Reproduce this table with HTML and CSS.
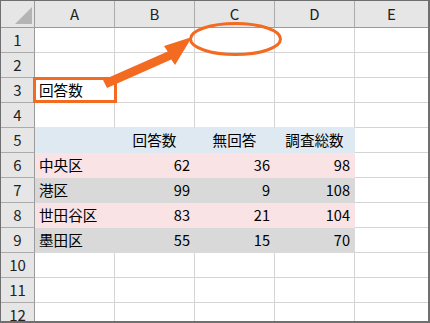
FILE: index.html
```html
<!DOCTYPE html>
<html>
<head>
<meta charset="utf-8">
<title>回答数</title>
<link rel="stylesheet" href="styles.css">
</head>
<body>
<div class="frame">
    <div class="sheet">
        <div class="hd corner"><span class="selall"></span></div>
        <div class="hd col">A</div>
        <div class="hd col">B</div>
        <div class="hd col">C</div>
        <div class="hd col">D</div>
        <div class="hd col last">E</div>

        <div class="hd row">1</div>
        <div class="c"></div><div class="c"></div><div class="c"></div><div class="c"></div><div class="c last"></div>

        <div class="hd row">2</div>
        <div class="c"></div><div class="c"></div><div class="c"></div><div class="c"></div><div class="c last"></div>

        <div class="hd row">3</div>
        <div class="c">回答数</div><div class="c"></div><div class="c"></div><div class="c"></div><div class="c last"></div>

        <div class="hd row">4</div>
        <div class="c above"></div><div class="c above"></div><div class="c above"></div><div class="c above"></div><div class="c last"></div>

        <div class="hd row">5</div>
        <div class="c blue"></div>
        <div class="c blue mid">回答数</div>
        <div class="c blue mid">無回答</div>
        <div class="c blue mid">調査総数</div>
        <div class="c last"></div>

        <div class="hd row">6</div>
        <div class="c pink">中央区</div>
        <div class="c pink num">62</div>
        <div class="c pink num">36</div>
        <div class="c pink num">98</div>
        <div class="c last"></div>

        <div class="hd row">7</div>
        <div class="c gray">港区</div>
        <div class="c gray num">99</div>
        <div class="c gray num">9</div>
        <div class="c gray num">108</div>
        <div class="c last"></div>

        <div class="hd row">8</div>
        <div class="c pink">世田谷区</div>
        <div class="c pink num">83</div>
        <div class="c pink num">21</div>
        <div class="c pink num">104</div>
        <div class="c last"></div>

        <div class="hd row">9</div>
        <div class="c gray">墨田区</div>
        <div class="c gray num">55</div>
        <div class="c gray num">15</div>
        <div class="c gray num">70</div>
        <div class="c last"></div>

        <div class="hd row">10</div>
        <div class="c"></div><div class="c"></div><div class="c"></div><div class="c"></div><div class="c last"></div>

        <div class="hd row">11</div>
        <div class="c"></div><div class="c"></div><div class="c"></div><div class="c"></div><div class="c last"></div>

        <div class="hd row">12</div>
        <div class="c"></div><div class="c"></div><div class="c"></div><div class="c"></div><div class="c last"></div>
    </div>

    <!-- callout: box on A3, arrow, ring on C1 -->
    <svg class="marks" width="430" height="323" viewBox="0 0 430 323">
        <rect x="34.5" y="78.5" width="81" height="23" fill="none" stroke="#f26b21" stroke-width="3"/>
        <polygon points="103,80 167.7,51.4 164,46 192,37 175,65 171.3,59.6 107,88" fill="#f26b21"/>
        <ellipse cx="235.5" cy="39" rx="45" ry="15.5" fill="none" stroke="#f26b21" stroke-width="3"/>
    </svg>
</div>
</body>
</html>
```

FILE: styles.css
```css
body {
    margin: 0;
    background: #fff;
}
.frame {
    position: relative;
    width: 430px;
    height: 323px;
    box-sizing: border-box;
    border-style: solid;
    border-color: #6f6f6f;
    border-width: 1px 2px 2px 1px;
    overflow: hidden;
    font-family: "Noto Sans CJK JP", "Liberation Sans", sans-serif;
    font-size: 14.6px;
    color: #000;
}
.sheet {
    display: grid;
    grid-template-columns: 34px repeat(4, 80px) 73px;
    grid-template-rows: 27px;
    grid-auto-rows: 25px;
}
.sheet > div {
    box-sizing: border-box;
    border-right: 1px solid #d4d4d4;
    border-bottom: 1px solid #d4d4d4;
    display: flex;
    align-items: center;
    padding-bottom: 2px;
    white-space: nowrap;
    overflow: hidden;
}
.sheet > div.last {
    border-right: none;
}

/* headers */
.hd {
    background-color: #e6e6e6;
    color: #222;
    justify-content: center;
    font-size: 15px;
}
.sheet > .hd.col {
    border-right-color: #ababab;
    border-bottom-color: #9b9b9b;
}
.sheet > .hd.row {
    border-right-color: #9b9b9b;
    border-bottom-color: #ababab;
}
.sheet > .hd.corner {
    position: relative;
    border-right-color: #9b9b9b;
    border-bottom-color: #9b9b9b;
}
.selall {
    position: absolute;
    right: 2px;
    bottom: 3px;
    width: 17px;
    height: 17px;
    background: #b4b4b4;
    clip-path: polygon(100% 0, 100% 100%, 0 100%);
}

/* cells */
.sheet > .c {
    padding-left: 4px;
    padding-right: 4px;
}
.c.mid {
    justify-content: center;
}
.c.num {
    justify-content: flex-end;
}
.sheet > .c.above {
    border-bottom-color: #dfe9f2;
}
.sheet > .c.blue {
    background: #dfe9f2;
    border-color: #dfe9f2;
}
.sheet > .c.pink {
    background: #f9e3e4;
    border-color: #f9e3e4;
}
.sheet > .c.gray {
    background: #d9d9d9;
    border-color: #d9d9d9;
}

.marks {
    position: absolute;
    left: -1px;
    top: -1px;
    pointer-events: none;
}
```
